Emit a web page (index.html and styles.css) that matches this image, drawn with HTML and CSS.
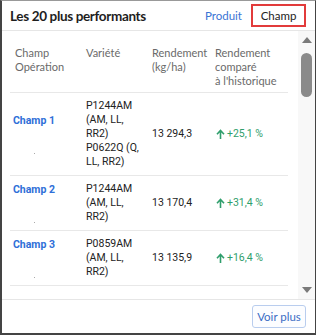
FILE: index.html
```html
<!DOCTYPE html>
<html lang="fr">
<head>
    <meta charset="UTF-8">
    <title>Les 20 plus performants</title>
    <link rel="stylesheet" href="styles.css">
</head>
<body>
    <div class="panel">
        <header class="panel-head">
            <h1>Les 20 plus performants</h1>
            <nav class="tabs">
                <a class="tab">Produit</a>
                <a class="tab active">Champ</a>
            </nav>
        </header>

        <div class="panel-body">
            <div class="table">
                <div class="row head">
                    <div class="cell first">Champ<br>Opération</div>
                    <div class="cell">Variété</div>
                    <div class="cell">Rendement<br>(kg/ha)</div>
                    <div class="cell">Rendement<br>comparé<br>à l'historique</div>
                </div>

                <div class="row">
                    <div class="cell champ"><a>Champ 1</a><span class="op"></span></div>
                    <div class="cell top">P1244AM<br>(AM, LL,<br>RR2)<br>P0622Q (Q,<br>LL, RR2)</div>
                    <div class="cell">13 294,3</div>
                    <div class="cell up"><svg class="arrow" width="9" height="10" viewBox="0 0 9 10"><path d="M4.5 10V1.6M1 5.2L4.5 1.4 8 5.2" fill="none" stroke="currentColor" stroke-width="1.6"/></svg>+25,1 %</div>
                </div>

                <div class="row">
                    <div class="cell champ"><a>Champ 2</a><span class="op"></span></div>
                    <div class="cell top">P1244AM<br>(AM, LL,<br>RR2)</div>
                    <div class="cell">13 170,4</div>
                    <div class="cell up"><svg class="arrow" width="9" height="10" viewBox="0 0 9 10"><path d="M4.5 10V1.6M1 5.2L4.5 1.4 8 5.2" fill="none" stroke="currentColor" stroke-width="1.6"/></svg>+31,4 %</div>
                </div>

                <div class="row">
                    <div class="cell champ"><a>Champ 3</a><span class="op"></span></div>
                    <div class="cell top">P0859AM<br>(AM, LL,<br>RR2)</div>
                    <div class="cell">13 135,9</div>
                    <div class="cell up"><svg class="arrow" width="9" height="10" viewBox="0 0 9 10"><path d="M4.5 10V1.6M1 5.2L4.5 1.4 8 5.2" fill="none" stroke="currentColor" stroke-width="1.6"/></svg>+16,4 %</div>
                </div>
            </div>

            <!-- barre de défilement -->
            <div class="scrollbar">
                <span class="tri up-tri"></span>
                <span class="thumb"></span>
                <span class="spacer"></span>
                <span class="tri down-tri"></span>
            </div>
        </div>

        <footer class="panel-foot">
            <button class="more">Voir plus</button>
        </footer>
    </div>
</body>
</html>
```

FILE: styles.css
```css
* {
    margin: 0;
    padding: 0;
    box-sizing: border-box;
}

body {
    font-family: 'Lato', 'Liberation Sans', sans-serif;
    color: #222;
    background-color: #fff;
}

.panel {
    width: 316px;
    height: 335px;
    display: flex;
    flex-direction: column;
    border: 1px solid #444;
    border-top-color: #999;
    border-left-width: 2px;
    border-bottom-width: 2px;
}

/* en-tête */
.panel-head {
    height: 30px;
    display: flex;
    align-items: center;
    justify-content: space-between;
    padding: 0 8px;
    border-bottom: 1px solid #e6e6e6;
}

.panel-head h1 {
    font-size: 13.5px;
    font-weight: 700;
    letter-spacing: -0.35px;
    color: #1e1e1e;
}

.tabs {
    display: flex;
    align-items: center;
    gap: 9px;
    margin-right: 1px;
}

.tab {
    font-size: 11.5px;
    color: #3a74d4;
}

.tab.active {
    color: #222;
    border: 2px solid #e23b3b;
    width: 55px;
    height: 23px;
    display: flex;
    align-items: center;
    justify-content: center;
}

/* tableau */
.panel-body {
    flex: 1;
    display: flex;
    overflow: hidden;
    border-bottom: 1px solid #e6e6e6;
}

.table {
    flex: 1;
    padding: 0 10px 0 8px;
    overflow: hidden;
}

.row {
    display: grid;
    grid-template-columns: 76px 66px 63px 1fr;
    border-bottom: 1px solid #e8e8e8;
    padding: 6px 0 6px;
    font-family: 'Roboto', 'Liberation Sans', sans-serif;
    font-size: 10.5px;
    line-height: 14px;
    color: #222;
}

.row.head {
    padding: 15px 0 4px;
    font-family: 'Lato', 'Liberation Sans', sans-serif;
    font-size: 11px;
    color: #6a6a6a;
}

.cell {
    align-self: center;
}

.row.head .cell {
    align-self: start;
}

.cell.first {
    padding-left: 5px;
}

.cell.top {
    align-self: start;
}

.cell.champ {
    display: flex;
    flex-direction: column;
    justify-content: space-between;
    height: 40px;
    padding-left: 3px;
}

.champ a {
    color: #2f6fd8;
    font-weight: 700;
}

.op {
    width: 1px;
    height: 1px;
    margin-left: 21px;
    background-color: #aaa;
}

.up {
    display: flex;
    align-items: center;
    color: #2f9e6c;
    padding-left: 1px;
}

.arrow {
    margin-right: 2px;
}

/* barre de défilement */
.scrollbar {
    width: 17px;
    display: flex;
    flex-direction: column;
    align-items: center;
    padding: 6px 0 6px;
    background-color: #f8f8f8;
}

.tri {
    width: 0;
    height: 0;
    border-left: 5px solid transparent;
    border-right: 5px solid transparent;
}

.up-tri {
    border-bottom: 6px solid #7a7a7a;
}

.down-tri {
    border-top: 6px solid #7a7a7a;
}

.thumb {
    width: 11px;
    height: 44px;
    margin-top: 10px;
    border-radius: 6px;
    background-color: #8a8a8a;
}

.spacer {
    flex: 1;
}

/* pied */
.panel-foot {
    height: 33px;
    display: flex;
    align-items: center;
    justify-content: flex-end;
    padding: 0 9px 1px;
}

.more {
    width: 54px;
    height: 23px;
    font-family: 'Lato', 'Liberation Sans', sans-serif;
    font-size: 11.5px;
    color: #3a6cc4;
    background-color: #fcfdff;
    border: 1px solid #b9cdee;
    border-radius: 3px;
}
```
